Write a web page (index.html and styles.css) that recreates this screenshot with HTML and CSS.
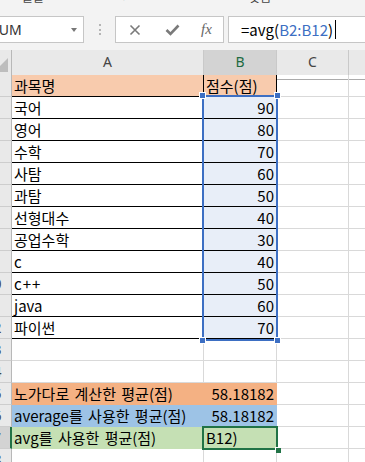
FILE: index.html
```html
<!DOCTYPE html>
<html>
<head>
    <title>Excel - avg</title>
    <link rel="stylesheet" href="styles.css">
</head>
<body>
<div class="page">
    <!-- bottom edge of the ribbon -->
    <div class="ribbon">
        <div class="ribbon-labels">
            <span class="lbl lbl-font">글꼴</span>
            <span class="lbl lbl-launch">↘</span>
            <span class="lbl lbl-align">맞춤</span>
        </div>
    </div>

    <!-- formula bar -->
    <div class="formula-bar">
        <div class="name-box">
            <span class="name-text">SUM</span>
            <span class="caret-down"></span>
        </div>
        <div class="grip"></div>
        <div class="fx-buttons">
            <svg class="btn-x" width="12" height="12" viewBox="0 0 12 12">
                <path d="M1.5 1.5 L10.5 10.5 M10.5 1.5 L1.5 10.5" stroke="#7a7a7a" stroke-width="1.6" fill="none"/>
            </svg>
            <svg class="btn-ok" width="15" height="12" viewBox="0 0 15 12">
                <path d="M1.5 6 L5.5 10 L13.5 1.5" stroke="#7a7a7a" stroke-width="2.6" fill="none"/>
            </svg>
            <span class="btn-fx">fx</span>
        </div>
        <div class="formula-input">
            <span>=avg(</span><span class="ref">B2:B12</span><span>)</span><span class="cursor"></span>
        </div>
    </div>

    <!-- sheet -->
    <div class="sheet">
        <div class="row col-head">
            <div class="corner">
                <svg width="35" height="24" viewBox="0 0 35 24"><polygon points="32,8 32,22 18,22" fill="#bdbdbd"/></svg>
            </div>
            <div class="ch">A</div>
            <div class="ch ch-on">B</div>
            <div class="ch">C</div>
            <div class="ch ch-last"></div>
        </div>

        <div class="row"><div class="rh">1</div><div class="c bk head">과목명</div><div class="c bk head">점수(점)</div><div class="c"></div><div class="c last"></div></div>
        <div class="row"><div class="rh">2</div><div class="c bk">국어</div><div class="c bk sel num">90</div><div class="c"></div><div class="c last"></div></div>
        <div class="row"><div class="rh">3</div><div class="c bk">영어</div><div class="c bk sel num">80</div><div class="c"></div><div class="c last"></div></div>
        <div class="row"><div class="rh">4</div><div class="c bk">수학</div><div class="c bk sel num">70</div><div class="c"></div><div class="c last"></div></div>
        <div class="row"><div class="rh">5</div><div class="c bk">사탐</div><div class="c bk sel num">60</div><div class="c"></div><div class="c last"></div></div>
        <div class="row"><div class="rh">6</div><div class="c bk">과탐</div><div class="c bk sel num">50</div><div class="c"></div><div class="c last"></div></div>
        <div class="row"><div class="rh">7</div><div class="c bk">선형대수</div><div class="c bk sel num">40</div><div class="c"></div><div class="c last"></div></div>
        <div class="row"><div class="rh">8</div><div class="c bk">공업수학</div><div class="c bk sel num">30</div><div class="c"></div><div class="c last"></div></div>
        <div class="row"><div class="rh">9</div><div class="c bk">c</div><div class="c bk sel num">40</div><div class="c"></div><div class="c last"></div></div>
        <div class="row"><div class="rh">10</div><div class="c bk plus">c++</div><div class="c bk sel num">50</div><div class="c"></div><div class="c last"></div></div>
        <div class="row"><div class="rh">11</div><div class="c bk">java</div><div class="c bk sel num">60</div><div class="c"></div><div class="c last"></div></div>
        <div class="row"><div class="rh">12</div><div class="c bk">파이썬</div><div class="c bk sel num">70</div><div class="c"></div><div class="c last"></div></div>
        <div class="row"><div class="rh">13</div><div class="c"></div><div class="c"></div><div class="c"></div><div class="c last"></div></div>
        <div class="row"><div class="rh">14</div><div class="c"></div><div class="c"></div><div class="c"></div><div class="c last"></div></div>
        <div class="row"><div class="rh">15</div><div class="c fill-orange">노가다로 계산한 평균(점)</div><div class="c fill-orange num">58.18182</div><div class="c"></div><div class="c last"></div></div>
        <div class="row"><div class="rh">16</div><div class="c fill-blue">average를 사용한 평균(점)</div><div class="c fill-blue num">58.18182</div><div class="c"></div><div class="c last"></div></div>
        <div class="row"><div class="rh rh-on">17</div><div class="c fill-green">avg를 사용한 평균(점)</div><div class="c fill-green">B12)</div><div class="c"></div><div class="c last"></div></div>
        <div class="row"><div class="rh">18</div><div class="c"></div><div class="c"></div><div class="c"></div><div class="c last"></div></div>

        <!-- referenced range B2:B12 -->
        <div class="sel-range">
            <span class="hd hd-tl"></span>
            <span class="hd hd-tr"></span>
            <span class="hd hd-bl"></span>
            <span class="hd hd-br"></span>
        </div>
        <!-- active cell B17 -->
        <div class="active-cell"><span class="fill-handle"></span></div>
    </div>
</div>
</body>
</html>
```

FILE: styles.css
```css
body {
    margin: 0;
    padding: 0;
    overflow: hidden;
    background-color: #fff;
    font-family: "Noto Sans CJK KR", "Noto Sans", sans-serif;
    color: #000;
}

/* page is shifted left so the row numbers and name box are clipped like the screenshot */
.page {
    margin-left: -24px;
    width: 420px;
}

.ribbon {
    height: 7px;
    overflow: hidden;
    background-color: #f3f3f3;
}

.ribbon-labels {
    display: flex;
    margin-top: -10px;
    font-size: 12px;
    line-height: 14px;
    color: #444;
}

.lbl-font {
    margin-left: 46px;
}

.lbl-launch {
    margin-left: 72px;
    font-size: 10px;
}

.lbl-align {
    margin-left: 123px;
}

.formula-bar {
    display: flex;
    align-items: center;
    height: 43px;
    background-color: #f3f3f3;
    box-sizing: border-box;
    padding-top: 2px;
}

.name-box {
    display: flex;
    align-items: center;
    width: 108px;
    height: 27px;
    box-sizing: border-box;
    background-color: #fff;
    border: 1px solid #c6c6c6;
    padding-left: 14px;
}

.name-text {
    font-family: "Noto Sans", sans-serif;
    font-size: 14px;
    color: #333;
}

.caret-down {
    margin-left: auto;
    margin-right: 6px;
    width: 0;
    height: 0;
    border-left: 3px solid transparent;
    border-right: 3px solid transparent;
    border-top: 4px solid #777;
}

.grip {
    width: 2px;
    height: 11px;
    margin-left: 15px;
    border-left: 2px dotted #b5b5b5;
    box-sizing: border-box;
}

.fx-buttons {
    display: flex;
    align-items: center;
    width: 109px;
    height: 27px;
    margin-left: 14px;
    box-sizing: border-box;
    background-color: #fff;
    border: 1px solid #c6c6c6;
    padding-left: 13px;
}

.btn-ok {
    margin-left: 24px;
}

.btn-fx {
    margin-left: 21px;
    font-family: "Liberation Serif", serif;
    font-style: italic;
    font-size: 15px;
    color: #666;
}

.formula-input {
    display: flex;
    align-items: center;
    flex: 1;
    height: 27px;
    margin-left: 4px;
    box-sizing: border-box;
    background-color: #fff;
    border: 1px solid #c6c6c6;
    border-right: none;
    padding-left: 12px;
    font-size: 15px;
    white-space: pre;
}

.formula-input .ref {
    color: #3d6fc3;
}

.cursor {
    width: 1px;
    height: 19px;
    margin-left: 2px;
    background-color: #000;
}

/* grid */
.sheet {
    position: relative;
}

.row {
    display: grid;
    grid-template-columns: 36px 192px 73px 72px 1fr;
    height: 22px;
}

.col-head {
    height: 25px;
    background-color: #e9e9e9;
}

.corner {
    border-right: 1px solid #b8b8b8;
    border-bottom: 1px solid #ababab;
    box-sizing: border-box;
}

.ch {
    box-sizing: border-box;
    border-right: 1px solid #c9c9c9;
    border-bottom: 1px solid #ababab;
    text-align: center;
    font-family: "Noto Sans", sans-serif;
    font-size: 14px;
    line-height: 24px;
    color: #444;
}

.ch-on {
    background-color: #d3d3d3;
    border-bottom: 2px solid #217346;
    color: #1e6b42;
}

.ch-last {
    border-right: none;
}

.rh {
    box-sizing: border-box;
    background-color: #e9e9e9;
    border-right: 1px solid #b8b8b8;
    border-bottom: 1px solid #cdcdcd;
    text-align: center;
    font-family: "Noto Sans", sans-serif;
    font-size: 14px;
    line-height: 21px;
    color: #444;
}

.rh-on {
    background-color: #d3d3d3;
    border-right: 2px solid #217346;
}

.c {
    box-sizing: border-box;
    border-right: 1px solid #d9d9d9;
    border-bottom: 1px solid #d9d9d9;
    padding: 0 2px 0 2px;
    font-size: 15px;
    line-height: 21px;
    word-spacing: 2px;
    white-space: nowrap;
    overflow: hidden;
}

.c.last {
    border-right: none;
}

.plus {
    letter-spacing: 1px;
}

.bk {
    border-right-color: #000;
    border-bottom-color: #000;
}

.head {
    background-color: #f8cbad;
}

.sel {
    background-color: #e8eef8;
}

.num {
    text-align: right;
}

.fill-orange {
    background-color: #f4b183;
    border-color: #f4b183;
}

.fill-blue {
    background-color: #9dc3e6;
    border-color: #9dc3e6;
}

.fill-green {
    background-color: #c5e0b4;
    border-color: #c5e0b4;
}

/* overlays on top of the grid */
.sel-range {
    position: absolute;
    left: 226px;
    top: 45px;
    width: 76px;
    height: 246px;
    box-sizing: border-box;
    border: 2px solid #3d6fc3;
}

.hd {
    position: absolute;
    width: 5px;
    height: 5px;
    background-color: #3d6fc3;
    border: 1px solid #fff;
}

.hd-tl { left: -5px; top: -5px; }
.hd-tr { right: -5px; top: -5px; }
.hd-bl { left: -5px; bottom: -5px; }
.hd-br { right: -5px; bottom: -5px; }

.active-cell {
    position: absolute;
    left: 226px;
    top: 376px;
    width: 76px;
    height: 24px;
    box-sizing: border-box;
    border: 2px solid #217346;
}

.fill-handle {
    position: absolute;
    right: -5px;
    bottom: -5px;
    width: 5px;
    height: 5px;
    background-color: #217346;
    border-left: 1px solid #fff;
    border-top: 1px solid #fff;
}
```
